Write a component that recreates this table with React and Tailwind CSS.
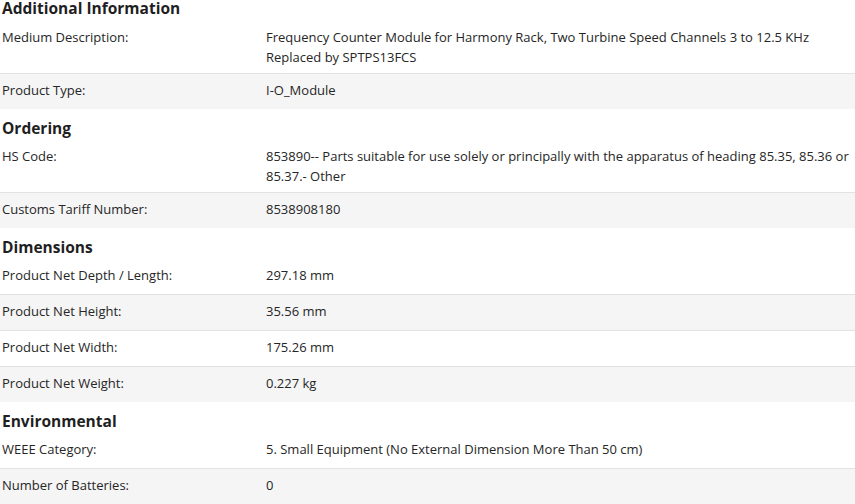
const sections = [
  {
    title: 'Additional Information',
    rows: [
      ['Medium Description:', ['Frequency Counter Module for Harmony Rack, Two Turbine Speed Channels 3 to 12.5 KHz', 'Replaced by SPTPS13FCS']],
      ['Product Type:', ['I-O_Module']],
    ],
  },
  {
    title: 'Ordering',
    rows: [
      ['HS Code:', ['853890-- Parts suitable for use solely or principally with the apparatus of heading 85.35, 85.36 or', '85.37.- Other']],
      ['Customs Tariff Number:', ['8538908180']],
    ],
  },
  {
    title: 'Dimensions',
    rows: [
      ['Product Net Depth / Length:', ['297.18 mm']],
      ['Product Net Height:', ['35.56 mm']],
      ['Product Net Width:', ['175.26 mm']],
      ['Product Net Weight:', ['0.227 kg']],
    ],
  },
  {
    title: 'Environmental',
    rows: [
      ['WEEE Category:', ['5. Small Equipment (No External Dimension More Than 50 cm)']],
      ['Number of Batteries:', ['0']],
    ],
  },
]

function Row({ label, value, odd, last }) {
  return (
    <div
      className={`flex min-h-[36px] border-b py-[6px] leading-5 ${odd ? 'bg-[#f5f5f5]' : 'bg-white'} ${last ? 'border-white' : 'border-[#e2e2e2]'}`}
    >
      <div className="w-[266px] shrink-0 pl-[2px]">{label}</div>
      <div className="flex-1 pr-2">
        {value.map((line) => (
          <div key={line} className="whitespace-nowrap">{line}</div>
        ))}
      </div>
    </div>
  )
}

export default function App() {
  return (
    <div
      className="h-[504px] w-[855px] overflow-hidden bg-white text-[13px] text-[#262626]"
      style={{ fontFamily: '"Open Sans", "Noto Sans", sans-serif' }}
    >
      {sections.map((s, n) => (
        <section key={s.title}>
          <h3
            className={`pl-[2px] text-[15.5px] font-bold text-[#1f1f1f] ${n === 0 ? 'mb-[5px] leading-4' : 'pt-[6px] leading-6'}`}
          >
            {s.title}
          </h3>
          {s.rows.map(([label, value], i) => (
            <Row key={label} label={label} value={value} odd={i % 2 === 1} last={i === s.rows.length - 1} />
          ))}
        </section>
      ))}
    </div>
  )
}
